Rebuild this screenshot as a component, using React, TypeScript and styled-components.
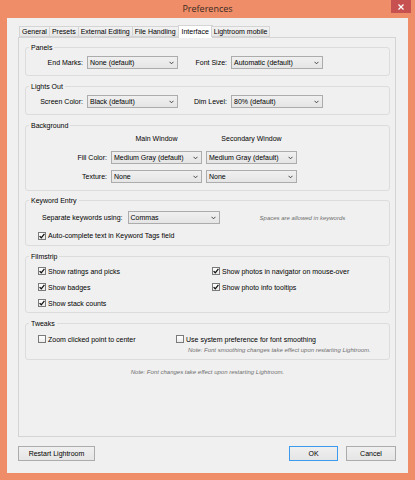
import React from 'react';
import styled, { createGlobalStyle } from 'styled-components';

const GlobalStyle = createGlobalStyle`
  html, body { margin: 0; padding: 0; background: #ffffff; }
  body { font-family: "Liberation Sans", Arial, sans-serif; color: #000; }
  * { box-sizing: border-box; }
`;

const Window = styled.div`
  width: 415px;
  height: 480px;
  background: #ee8d67;
  display: flex;
  flex-direction: column;
`;

const TitleBar = styled.div`
  height: 18px;
  display: grid;
  grid-template-columns: 1fr auto 1fr;
  align-items: start;
`;

const Title = styled.div`
  grid-column: 2;
  font-family: "Open Sans", "Liberation Sans", sans-serif;
  font-size: 9px;
  line-height: 18px;
  color: #3a2a22;
`;

const CloseButton = styled.div`
  grid-column: 3;
  justify-self: end;
  margin-right: 4px;
  width: 20px;
  height: 13px;
  background: #c75050;
  display: flex;
  align-items: center;
  justify-content: center;
`;

const Client = styled.div`
  flex: 1;
  margin: 0 7px 7px;
  background: #f0f0f0;
  display: flex;
  flex-direction: column;
  padding: 8px 12px 0 11px;
`;

const TabStrip = styled.div`
  height: 12px;
  display: flex;
  align-items: flex-end;
  padding-left: 1px;
  margin-bottom: -1px;
  position: relative;
  z-index: 1;
`;

const Tab = styled.div<{ $active?: boolean }>`
  height: ${p => (p.$active ? 13 : 11)}px;
  padding: 0 ${p => (p.$active ? 3 : 2)}px;
  margin: ${p => (p.$active ? '0 -1px' : '0 0 1px')};
  border: 1px solid #d4d4d4;
  border-bottom: ${p => (p.$active ? 'none' : '1px solid #d4d4d4')};
  background: ${p => (p.$active ? '#ffffff' : 'linear-gradient(#f2f2f2, #e6e6e6)')};
  font-size: 7px;
  line-height: ${p => (p.$active ? 11 : 9)}px;
  white-space: nowrap;
  & + & { margin-left: -1px; }
`;

const Panel = styled.div`
  height: 400px;
  border: 1px solid #d4d4d4;
  background: #f0f0f0;
  padding: 0 5px 0 6px;
  display: flex;
  flex-direction: column;
`;

const Group = styled.fieldset<{ $mt: number; $pb: number }>`
  margin: ${p => p.$mt}px 0 0;
  padding: 0 0 ${p => p.$pb}px;
  border: 1px solid #dcdcdc;
  border-radius: 3px;
  min-width: 0;
`;

const Legend = styled.legend`
  font-size: 7px;
  line-height: 9px;
  padding: 0 2px;
  margin-left: 3px;
`;

const FieldGrid = styled.div<{ $cols: string; $mt: number }>`
  display: grid;
  grid-template-columns: ${p => p.$cols};
  column-gap: 4px;
  row-gap: 6px;
  align-items: center;
  margin-top: ${p => p.$mt}px;
`;

const FieldLabel = styled.div`
  font-size: 7px;
  text-align: right;
  white-space: nowrap;
`;

const ColumnHead = styled.div`
  font-size: 7px;
  line-height: 9px;
  text-align: center;
  margin-bottom: 2px;
`;

const SelectBox = styled.div<{ $w?: number; $ml?: number }>`
  height: 13px;
  ${p => (p.$w ? `width: ${p.$w}px;` : '')}
  margin-left: ${p => p.$ml ?? 0}px;
  border: 1px solid #acacac;
  background: linear-gradient(#f0f0f0, #e5e5e5);
  display: flex;
  align-items: center;
  justify-content: space-between;
  padding: 0 3px 0 2px;
  font-size: 7px;
  white-space: nowrap;
`;

const Chevron = () => (
  <svg width="5" height="4" viewBox="0 0 5 4">
    <path d="M0.5 0.8 L2.5 2.8 L4.5 0.8" fill="none" stroke="#333" strokeWidth="0.9" />
  </svg>
);

const Select = ({ value, w, ml }: { value: string; w?: number; ml?: number }) => (
  <SelectBox $w={w} $ml={ml}>
    <span>{value}</span>
    <Chevron />
  </SelectBox>
);

const KeywordRow = styled.div`
  display: flex;
  align-items: center;
  margin-top: 6px;
  padding-left: 16px;
`;

const Hint = styled.div<{ $ml?: number }>`
  font-size: 6px;
  font-style: italic;
  color: #6e6e6e;
  white-space: nowrap;
  margin-left: ${p => p.$ml ?? 0}px;
`;

const CheckRow = styled.div`
  display: flex;
  align-items: center;
  gap: 2px;
  font-size: 7px;
  white-space: nowrap;
`;

const Box = styled.span`
  width: 8px;
  height: 8px;
  border: 1px solid #7a7a7a;
  background: linear-gradient(#ffffff, #ececec);
  display: flex;
  align-items: center;
  justify-content: center;
  flex: none;
`;

const Check = ({ label, checked }: { label: string; checked?: boolean }) => (
  <CheckRow>
    <Box>
      {checked && (
        <svg width="6" height="6" viewBox="0 0 6 6">
          <path d="M0.6 3.1 L2.3 4.8 L5.4 0.9" fill="none" stroke="#111" strokeWidth="1.3" />
        </svg>
      )}
    </Box>
    {label}
  </CheckRow>
);

const CheckGrid = styled.div<{ $cols: string; $mt: number; $rh: number }>`
  display: grid;
  grid-template-columns: ${p => p.$cols};
  grid-auto-rows: ${p => p.$rh}px;
  align-items: center;
  padding-left: 12px;
  margin-top: ${p => p.$mt}px;
`;

const SingleCheck = styled.div`
  padding-left: 12px;
  margin-top: 7px;
  height: 9px;
  display: flex;
  align-items: center;
`;

const NoteLine = styled.div<{ $pl: number }>`
  padding-left: ${p => p.$pl}px;
  margin-top: 1px;
  height: 9px;
  display: flex;
  align-items: center;
`;

const Footnote = styled.div`
  margin-top: 8px;
  text-align: center;
  font-size: 6px;
  line-height: 9px;
  font-style: italic;
  color: #6e6e6e;
`;

const ButtonBar = styled.div`
  margin-top: 9px;
  display: flex;
  align-items: center;
  gap: 8px;
`;

const Button = styled.div<{ $w: number; $default?: boolean }>`
  width: ${p => p.$w}px;
  height: 15px;
  border: 1px solid ${p => (p.$default ? '#3c9bea' : '#acacac')};
  background: linear-gradient(#f0f0f0, #e5e5e5);
  font-size: 7px;
  display: flex;
  align-items: center;
  justify-content: center;
  &:first-child { margin-right: auto; }
`;

export default function App() {
  return (
    <>
      <GlobalStyle />
      <Window>
        <TitleBar>
          <Title>Preferences</Title>
          <CloseButton>
            <svg width="6" height="6" viewBox="0 0 6 6">
              <path d="M0.5 0.5 L5.5 5.5 M5.5 0.5 L0.5 5.5" stroke="#fff" strokeWidth="1.3" />
            </svg>
          </CloseButton>
        </TitleBar>
        <Client>
          <TabStrip>
            <Tab>General</Tab>
            <Tab>Presets</Tab>
            <Tab>External Editing</Tab>
            <Tab>File Handling</Tab>
            <Tab $active>Interface</Tab>
            <Tab>Lightroom mobile</Tab>
          </TabStrip>
          <Panel>
            <Group $mt={5} $pb={6}>
              <Legend>Panels</Legend>
              <FieldGrid $cols="57px 91px 45px 92px" $mt={4}>
                <FieldLabel>End Marks:</FieldLabel>
                <Select value="None (default)" />
                <FieldLabel>Font Size:</FieldLabel>
                <Select value="Automatic (default)" />
              </FieldGrid>
            </Group>

            <Group $mt={6} $pb={6}>
              <Legend>Lights Out</Legend>
              <FieldGrid $cols="57px 91px 45px 92px" $mt={4}>
                <FieldLabel>Screen Color:</FieldLabel>
                <Select value="Black (default)" />
                <FieldLabel>Dim Level:</FieldLabel>
                <Select value="80% (default)" />
              </FieldGrid>
            </Group>

            <Group $mt={6} $pb={7}>
              <Legend>Background</Legend>
              <FieldGrid $cols="81px 91px 91px" $mt={4}>
                <span />
                <ColumnHead>Main Window</ColumnHead>
                <ColumnHead>Secondary Window</ColumnHead>
                <FieldLabel>Fill Color:</FieldLabel>
                <Select value="Medium Gray (default)" />
                <Select value="Medium Gray (default)" />
                <FieldLabel>Texture:</FieldLabel>
                <Select value="None" />
                <Select value="None" />
              </FieldGrid>
            </Group>

            <Group $mt={5} $pb={5}>
              <Legend>Keyword Entry</Legend>
              <KeywordRow>
                <FieldLabel>Separate keywords using:</FieldLabel>
                <Select value="Commas" w={92} ml={5} />
                <Hint $ml={40}>Spaces are allowed in keywords</Hint>
              </KeywordRow>
              <SingleCheck>
                <Check checked label="Auto-complete text in Keyword Tags field" />
              </SingleCheck>
            </Group>

            <Group $mt={6} $pb={1}>
              <Legend>Filmstrip</Legend>
              <CheckGrid $cols="174px 1fr" $mt={2} $rh={16}>
                <Check checked label="Show ratings and picks" />
                <Check checked label="Show photos in navigator on mouse-over" />
                <Check checked label="Show badges" />
                <Check checked label="Show photo info tooltips" />
                <Check checked label="Show stack counts" />
              </CheckGrid>
            </Group>

            <Group $mt={6} $pb={5}>
              <Legend>Tweaks</Legend>
              <CheckGrid $cols="138px 1fr" $mt={6} $rh={10}>
                <Check label="Zoom clicked point to center" />
                <Check label="Use system preference for font smoothing" />
              </CheckGrid>
              <NoteLine $pl={162}>
                <Hint>Note: Font smoothing changes take effect upon restarting Lightroom.</Hint>
              </NoteLine>
            </Group>

            <Footnote>Note: Font changes take effect upon restarting Lightroom.</Footnote>
          </Panel>
          <ButtonBar>
            <Button $w={77}>Restart Lightroom</Button>
            <Button $w={49} $default>OK</Button>
            <Button $w={50}>Cancel</Button>
          </ButtonBar>
        </Client>
      </Window>
    </>
  );
}
